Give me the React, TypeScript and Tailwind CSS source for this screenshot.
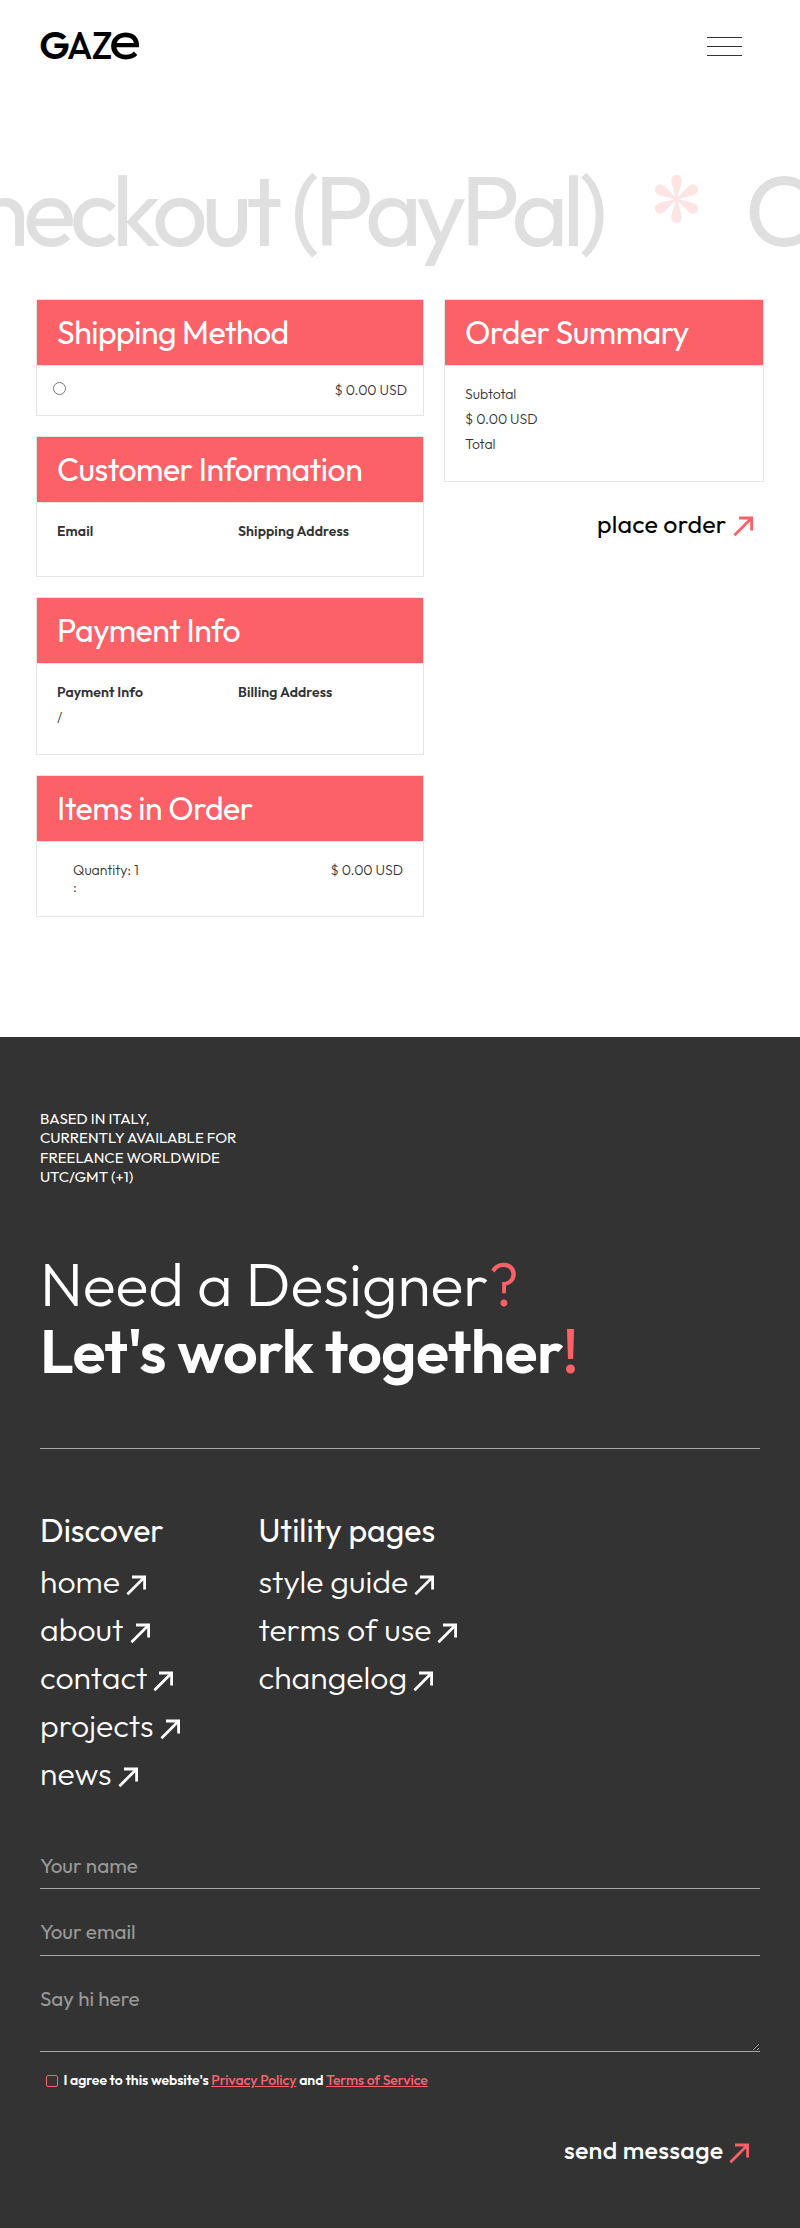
import type { ReactNode } from "react";

function Arrow({ className }: { className: string }) {
  return (
    <svg className={className} viewBox="0 0 21 21" fill="none" stroke="currentColor" strokeWidth="2.8">
      <path d="M6 2h12.6v12.4" />
      <path d="M18.4 2.2 1.4 19.2" />
    </svg>
  );
}

function Logo() {
  return (
    <svg className="h-[88px] w-[160px]" viewBox="0 0 160 88" fill="#000" fontFamily="Outfit, Lato, sans-serif">
      <text x="39.2" y="58.5" fontSize="39" fontWeight="600" textLength="30.5" lengthAdjust="spacingAndGlyphs">G</text>
      <text x="67.1" y="58.5" fontSize="39" fontWeight="550" textLength="25.5" lengthAdjust="spacingAndGlyphs">A</text>
      <text x="91.7" y="58.5" fontSize="39" fontWeight="550" textLength="20.7" lengthAdjust="spacingAndGlyphs">Z</text>
      <text x="109" y="58.5" fontSize="56" fontWeight="400" textLength="32" lengthAdjust="spacingAndGlyphs">e</text>
    </svg>
  );
}

const petals = [0, 60, 120, 180, 240, 300];

function Star() {
  return (
    <svg className="mr-[46.7px] ml-[53.6px] h-12 w-[43px] shrink-0" viewBox="-21.5 -24 43 48" fill="#ffe4e4">
      {petals.map((angle) => (
        <path
          key={angle}
          transform={`rotate(${angle})`}
          d="M-1 0C-1.6-8-5.2-13-5.2-18.6C-5.2-22-3-24 0-24S5.2-22 5.2-18.6C5.2-13 1.6-8 1 0Z"
        />
      ))}
    </svg>
  );
}

function Card({ title, children }: { title: string; children: ReactNode }) {
  return (
    <section>
      <h2 className="h-[67px] border border-[#e6e6e6] bg-[#fc6168] px-5 text-[32px] leading-[65px] font-normal tracking-[-0.5px] text-white">
        {title}
      </h2>
      <div className="border-x border-b border-[#e6e6e6]">{children}</div>
    </section>
  );
}

function LinkColumn({ title, links }: { title: string; links: string[] }) {
  return (
    <div>
      <h3 className="mb-[7px] text-[32px] leading-10">{title}</h3>
      <ul className="text-[32px] leading-[48px] font-light">
        {links.map((link) => (
          <li key={link} className="flex items-start">
            {link}
            <Arrow className="mt-[18px] ml-1.5 size-[21px]" />
          </li>
        ))}
      </ul>
    </div>
  );
}

const field =
  "block w-full rounded-none border-0 border-b border-[#a6a6a6] bg-transparent p-0 text-[20.6px] font-normal outline-none placeholder:text-[#999]";

export default function App() {
  return (
    <div className="h-[2228px] w-[800px] overflow-hidden bg-white font-[Outfit,Lato,sans-serif] text-[#333]">
      <header className="flex h-[88px] items-start justify-between pr-[58px]">
        <Logo />
        <div className="mt-[37px] flex w-[35px] flex-col gap-2">
          <span className="h-px bg-[#333]" />
          <span className="h-px bg-[#333]" />
          <span className="h-px bg-[#333]" />
        </div>
      </header>

      <div className="mt-[61.5px] flex h-[149.5px] overflow-hidden text-[98.5px] leading-[120px] tracking-[-6.2px] whitespace-nowrap text-[#dfdfdf]">
        <div className="flex w-[745px] shrink-0 justify-end">
          <span className="shrink-0">Checkout (PayPal)</span>
          <div className="pt-[25.5px]">
            <Star />
          </div>
        </div>
        <span className="shrink-0">Checkout (PayPal)</span>
      </div>

      <main className="flex h-[738px] items-start gap-5 px-9 text-sm leading-5 font-light">
        <div className="flex w-[388px] flex-col gap-5">
          <Card title="Shipping Method">
            <div className="flex h-[49px] items-start justify-between px-4 pt-[14px]">
              <span className="mt-0.5 size-[13px] rounded-full border border-[#767676]" />
              <span>$ 0.00 USD</span>
            </div>
          </Card>
          <Card title="Customer Information">
            <div className="grid h-[73px] grid-cols-2 gap-4 px-5 pt-[18px] font-semibold tracking-[0.11px]">
              <span>Email</span>
              <span>Shipping Address</span>
            </div>
          </Card>
          <Card title="Payment Info">
            <div className="grid h-[90px] grid-cols-2 gap-4 px-5 pt-[18px]">
              <div>
                <div className="mb-[5px] font-semibold tracking-[0.11px]">Payment Info</div>
                <div>/</div>
              </div>
              <span className="font-semibold tracking-[0.11px]">Billing Address</span>
            </div>
          </Card>
          <Card title="Items in Order">
            <div className="flex h-[74px] justify-between pt-5 pr-5 pl-9 leading-[17px]">
              <div>
                <div>Quantity: 1</div>
                <div>:</div>
              </div>
              <span>$ 0.00 USD</span>
            </div>
          </Card>
        </div>

        <div className="w-80">
          <Card title="Order Summary">
            <div className="flex h-[115px] flex-col gap-[5px] px-5 pt-[18px]">
              <span>Subtotal</span>
              <span>$ 0.00 USD</span>
              <span>Total</span>
            </div>
          </Card>
          <div className="mt-[26.5px] flex items-start justify-end pr-[10px] text-[25px] leading-[30px] font-normal tracking-[0.18px] text-black">
            place order
            <Arrow className="mt-[7px] ml-[6.5px] size-[21px] text-[#fc6168]" />
          </div>
        </div>
      </main>

      <footer className="h-[1191px] bg-[#333] px-10 pt-[71.5px] text-white">
        <p className="text-[15px] leading-[19.5px]">
          BASED IN ITALY,
          <br />
          CURRENTLY AVAILABLE FOR
          <br />
          FREELANCE WORLDWIDE
          <br />
          UTC/GMT (+1)
        </p>

        <h1 className="mt-[63.5px] h-[199px] border-b border-[#a6a6a6] text-[61px] leading-[67px] font-light tracking-[-0.08px]">
          Need a Designer<span className="text-[#fc6168]">?</span>
          <br />
          <span className="font-semibold tracking-[-0.6px]">
            Let's work together<span className="font-medium text-[#fc6168]">!</span>
          </span>
        </h1>

        <nav className="mt-[61px] grid h-[333px] grid-cols-[218.5px_1fr] items-start">
          <LinkColumn title="Discover" links={["home", "about", "contact", "projects", "news"]} />
          <LinkColumn title="Utility pages" links={["style guide", "terms of use", "changelog"]} />
        </nav>

        <form>
          <input className={`${field} h-[46px] pb-px`} placeholder="Your name" />
          <input className={`${field} mt-[21px] h-[46px] pb-[3px]`} placeholder="Your email" />
          <textarea className={`${field} mt-[21px] h-[75px] resize pt-2 leading-[26px]`} placeholder="Say hi here" />
          <div className="mt-[18px] flex items-start text-sm leading-5 font-semibold tracking-[-0.05px]">
            <span className="mt-[5px] mr-[5.5px] ml-1.5 size-3 rounded-[2px] border border-[#fc6168]" />
            <span>
              I agree to this website's{" "}
              <a className="font-medium text-[#fc6168] underline">Privacy Policy</a> and{" "}
              <a className="font-medium text-[#fc6168] underline">Terms of Service</a>
            </span>
          </div>
          <div className="mt-[45px] flex items-start justify-end pr-[10px] text-[25px] leading-[30px] font-medium tracking-[0.3px]">
            send message
            <Arrow className="mt-2 ml-[5.5px] size-[21px] text-[#fc6168]" />
          </div>
        </form>
      </footer>
    </div>
  );
}
